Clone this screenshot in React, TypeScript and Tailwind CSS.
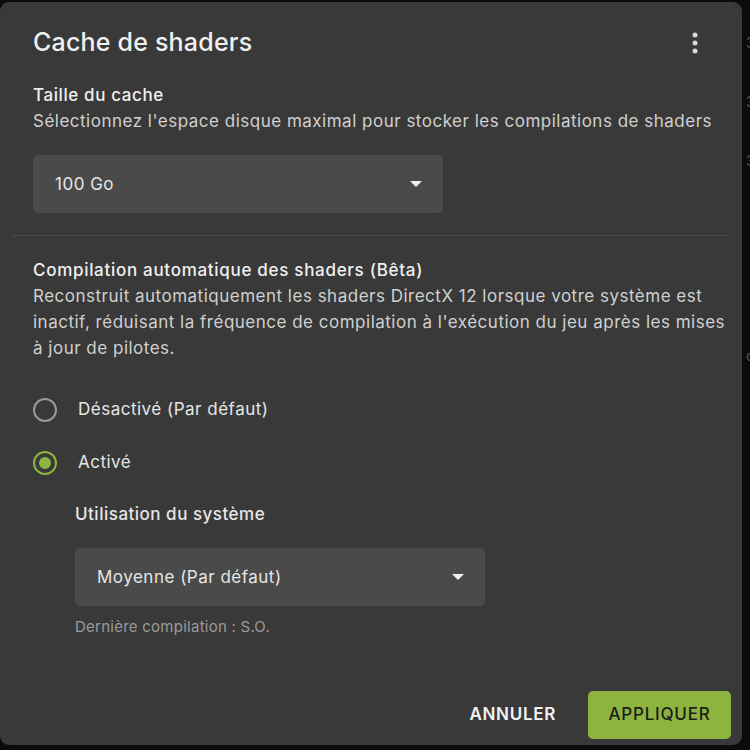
type RadioProps = {
  checked: boolean,
  label: string
}

function Radio(props: RadioProps) {
  const { checked, label } = props;
  return (
    <div className="flex items-center gap-[21px] h-[24px]">
      <div
        className={`w-[24px] h-[24px] rounded-full border-2 flex items-center justify-center ${checked ? 'border-[#8cb43f]' : 'border-[#9a9a9a]'}`}
      >
        {checked && <div className="w-[12px] h-[12px] rounded-full bg-[#8cb43f]"></div>}
      </div>
      <span className="text-[17px] tracking-[0.5px] text-[#e6e6e6]">{label}</span>
    </div>
  )
}

type SelectProps = {
  value: string,
  width: string
}

function Select(props: SelectProps) {
  const { value, width } = props;
  return (
    <div className={`${width} h-[58px] bg-[#4a4a4a] rounded-[5px] flex items-center justify-between pl-[22px] pr-[20px]`}>
      <span className="text-[17px] tracking-[0.5px] text-[#e6e6e6] pt-px">{value}</span>
      <svg width="14" height="8" viewBox="0 0 14 8">
        <path d="M1 1 L13 1 L7 7 Z" fill="#f0f0f0" />
      </svg>
    </div>
  )
}

export default function App() {
  return (
    <div className="w-[750px] h-[750px] bg-[#0b0b0b] overflow-hidden flex" style={{ fontFamily: 'Inter, "Noto Sans", sans-serif' }}>
      <div className="w-[742px] h-[743px] mt-[2px] bg-[#393939] rounded-[9px] flex flex-col shrink-0">
        <div className="flex items-center justify-between pl-[33px] pr-[44px] pt-[26px] h-[56px]">
          <h1 className="text-[25px] font-medium tracking-[0.2px] text-[#f0f0f0]">Cache de shaders</h1>
          <svg width="6" height="22" viewBox="0 0 6 22">
            <circle cx="3" cy="3" r="2.5" fill="#d8d8d8" />
            <circle cx="3" cy="11" r="2.5" fill="#d8d8d8" />
            <circle cx="3" cy="19" r="2.5" fill="#d8d8d8" />
          </svg>
        </div>

        <div className="px-[33px] pt-[24px]">
          <div className="text-[17px] font-medium tracking-[0.6px] text-[#f0f0f0] leading-[26px]">Taille du cache</div>
          <div className="text-[17px] tracking-[0.5px] text-[#d0d0d0] leading-[26px] whitespace-nowrap">
            Sélectionnez l'espace disque maximal pour stocker les compilations de shaders
          </div>
          <div className="mt-[21px]">
            <Select value="100 Go" width="w-[410px]" />
          </div>
        </div>

        <div className="mx-[12px] mt-[22px] h-px bg-[#4a4a4a]"></div>

        <div className="px-[33px] pt-[21px]">
          <div className="text-[17px] font-medium tracking-[0.7px] text-[#f0f0f0] leading-[26px]">Compilation automatique des shaders (Bêta)</div>
          <div className="text-[17px] tracking-[0.5px] text-[#d0d0d0] leading-[26px] whitespace-nowrap">
            Reconstruit automatiquement les shaders DirectX 12 lorsque votre système est<br />
            inactif, réduisant la fréquence de compilation à l'exécution du jeu après les mises<br />
            à jour de pilotes.
          </div>

          <div className="flex flex-col gap-[29px] mt-[37px]">
            <Radio checked={false} label="Désactivé (Par défaut)" />
            <Radio checked={true} label="Activé" />
          </div>

          <div className="pl-[42px] mt-[26px]">
            <div className="text-[17px] font-medium tracking-[0.5px] text-[#e6e6e6] leading-[26px]">Utilisation du système</div>
            <div className="mt-[21px]">
              <Select value="Moyenne (Par défaut)" width="w-[410px]" />
            </div>
            <div className="mt-[10px] text-[15px] tracking-[0.25px] text-[#9a9a9a]">Dernière compilation : S.O.</div>
          </div>
        </div>

        <div className="mt-auto flex items-center justify-end gap-[32px] pr-[11px] pb-[6px]">
          <button className="text-[17px] font-semibold text-[#f2f2f2] tracking-[0.7px]">ANNULER</button>
          <button className="w-[143px] h-[48px] rounded-[5px] bg-[#8cb43f] text-[17px] font-medium text-[#1c1c1c] tracking-[0.8px]">APPLIQUER</button>
        </div>
      </div>
      <div className="flex flex-col pl-[4px] text-[14px] text-[#5a5a5a] shrink-0">
        <div className="mt-[32px]">3</div>
        <div className="mt-[38px]">3</div>
        <div className="mt-[38px]">3</div>
        <div className="mt-[174px]">d</div>
      </div>
    </div>
  )
}
